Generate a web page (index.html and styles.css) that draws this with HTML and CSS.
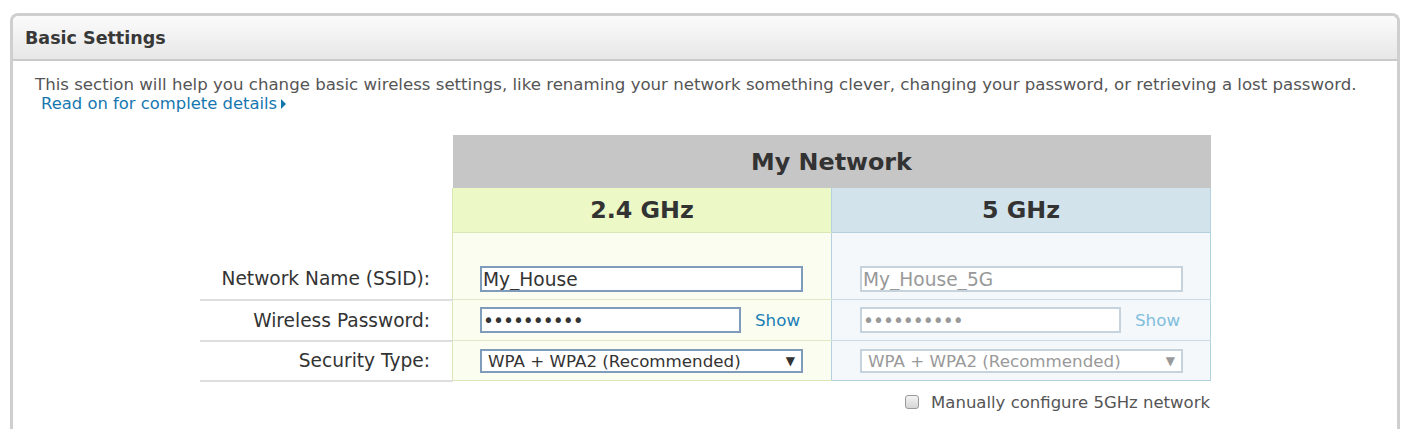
FILE: index.html
```html
<!DOCTYPE html>
<html>
<head>
<meta charset="utf-8">
<link rel="stylesheet" href="styles.css">
</head>
<body>
<div class="panel">
  <div class="panel-head">Basic Settings</div>
  <div class="panel-body">
    <p class="desc">This section will help you change basic wireless settings, like renaming your network something clever, changing your password, or retrieving a lost password.</p>
    <a class="more" href="#">Read on for complete details<span class="caret"></span></a>
    <table class="net">
      <tr class="h1">
        <td class="lbl-empty"></td>
        <th colspan="2" class="title">My Network</th>
      </tr>
      <tr class="h2">
        <td class="lbl-empty"></td>
        <th class="g head">2.4 GHz</th>
        <th class="b head">5 GHz</th>
      </tr>
      <tr class="r1">
        <td class="lbl">Network Name (SSID):</td>
        <td class="g cell"><input class="field wide" type="text" value="My_House"></td>
        <td class="b cell"><input class="field wide off" type="text" value="My_House_5G" disabled></td>
      </tr>
      <tr class="r2">
        <td class="lbl">Wireless Password:</td>
        <td class="g cell"><div class="pw"><input class="field short" type="password" value="abcdefghij"><a class="show" href="#">Show</a></div></td>
        <td class="b cell"><div class="pw"><input class="field short off" type="password" value="abcdefghij" disabled><a class="show off" href="#">Show</a></div></td>
      </tr>
      <tr class="r3">
        <td class="lbl">Security Type:</td>
        <td class="g cell"><div class="sel"><span>WPA + WPA2 (Recommended)</span><span class="arrow">▼</span></div></td>
        <td class="b cell"><div class="sel off"><span>WPA + WPA2 (Recommended)</span><span class="arrow">▼</span></div></td>
      </tr>
    </table>
    <div class="manual">
      <label><span class="cb"></span>Manually configure 5GHz network</label>
    </div>
  </div>
</div>
</body>
</html>
```

FILE: styles.css
```css
html, body {
  margin: 0;
  padding: 0;
  background: #fff;
  font-family: "DejaVu Sans", Verdana, sans-serif;
  color: #333;
}
.panel {
  margin: 13px 0 0 10px;
  width: 1384px;
  height: 413px;
  overflow: hidden;
  border: 3px solid #cfcfcf;
  border-bottom: none;
  border-radius: 8px 8px 0 0;
  box-sizing: content-box;
}
.panel-head {
  height: 45px;
  box-sizing: border-box;
  padding: 11px 0 0 12px;
  font-size: 17.5px;
  line-height: 22px;
  font-weight: bold;
  color: #383838;
  background: linear-gradient(#fbfbfb, #e7e7e7);
  border-bottom: 2px solid #c9c9c9;
  border-radius: 6px 6px 0 0;
}
.panel-body {
  padding: 14px 0 0 22px;
}
.desc {
  margin: 0;
  font-size: 16.6px;
  line-height: 19px;
  color: #555;
}
.more {
  display: inline-block;
  margin-left: 6px;
  font-size: 16.4px;
  line-height: 19px;
  color: #1677b0;
  text-decoration: none;
}
.caret {
  display: inline-block;
  width: 0;
  height: 0;
  margin-left: 4px;
  border-left: 5px solid #1677b0;
  border-top: 5px solid transparent;
  border-bottom: 5px solid transparent;
  vertical-align: 0;
}
.net {
  margin: 22px 0 0 165px;
  border-collapse: collapse;
  font-size: 16px;
}
.net td, .net th {
  padding: 0;
}
.lbl-empty { width: 252px; }
.title {
  height: 53px;
  background: #c6c6c6;
  font-size: 23.8px;
  font-weight: bold;
  color: #333;
  text-align: center;
  padding-top: 2px;
}
.head {
  width: 378px;
  height: 44px;
  font-size: 23.8px;
  font-weight: bold;
  color: #333;
  text-align: center;
}
.g {
  background: #fafdf0;
  border-left: 1px solid #d9e6b6;
}
.g.head {
  background: #ecf9c6;
  border-bottom: 1px solid #d9e6b6;
}
.b {
  background: #f4f8fb;
  border-left: 1px solid #b3d2e0;
  border-right: 1px solid #b3d2e0;
}
.b.head {
  background: #d2e3ec;
  border-bottom: 1px solid #b3d2e0;
}
.lbl {
  text-align: right;
  padding-right: 22px !important;
  font-size: 18.6px;
  color: #333;
  border-bottom: 2px solid #dedede;
}
.r1 td {
  height: 26px;
  padding-top: 33px !important;
  padding-bottom: 7px !important;
  vertical-align: middle;
}
.r2 td { height: 39px; }
.r3 td { height: 38px; }
.g.cell { border-bottom: 1px solid #dfe8c6; padding-left: 27px !important; }
.b.cell { border-bottom: 1px solid #c9dce6; padding-left: 28px !important; }
.r3 .g.cell { border-bottom: 1px solid #d9e6b6; }
.r3 .b.cell { border-bottom: 1px solid #b3d2e0; }
.field {
  box-sizing: border-box;
  height: 26px;
  border: 2px solid #7f9cba;
  background: #fff;
  font-family: "DejaVu Sans", Verdana, sans-serif;
  font-size: 18.6px;
  color: #333;
  padding: 0 1px;
  margin: 0;
  display: block;
  outline: none;
}
.field[type="password"] { letter-spacing: -1px; }
.field.wide { width: 323px; }
.field.short { width: 261px; }
.field.off {
  border-color: #c6d2dc;
  color: #999;
  background: #fff;
}
.pw {
  display: flex;
  align-items: center;
  gap: 14px;
}
.show {
  font-size: 16.7px;
  color: #1a7db6;
  text-decoration: none;
}
.show.off { color: #80bedb; }
.sel {
  box-sizing: border-box;
  width: 323px;
  height: 24px;
  border: 2px solid #7f9cba;
  background: #fff;
  display: flex;
  align-items: center;
  justify-content: space-between;
  padding: 0 6px 0 6px;
  font-size: 16.7px;
  color: #333;
}
.sel .arrow { font-size: 12px; color: #333; }
.sel.off { border-color: #c6d2dc; color: #999; }
.sel.off .arrow { color: #999; }
.manual {
  width: 1175px;
  display: flex;
  justify-content: flex-end;
  margin-top: 11px;
}
.manual label {
  display: flex;
  align-items: center;
  font-size: 16.5px;
  color: #555;
}
.cb {
  width: 12px;
  height: 12px;
  border: 1px solid #9a9a9a;
  border-radius: 3px;
  background: linear-gradient(#f4f4f4, #d6d6d6);
  margin-right: 12px;
}
```
